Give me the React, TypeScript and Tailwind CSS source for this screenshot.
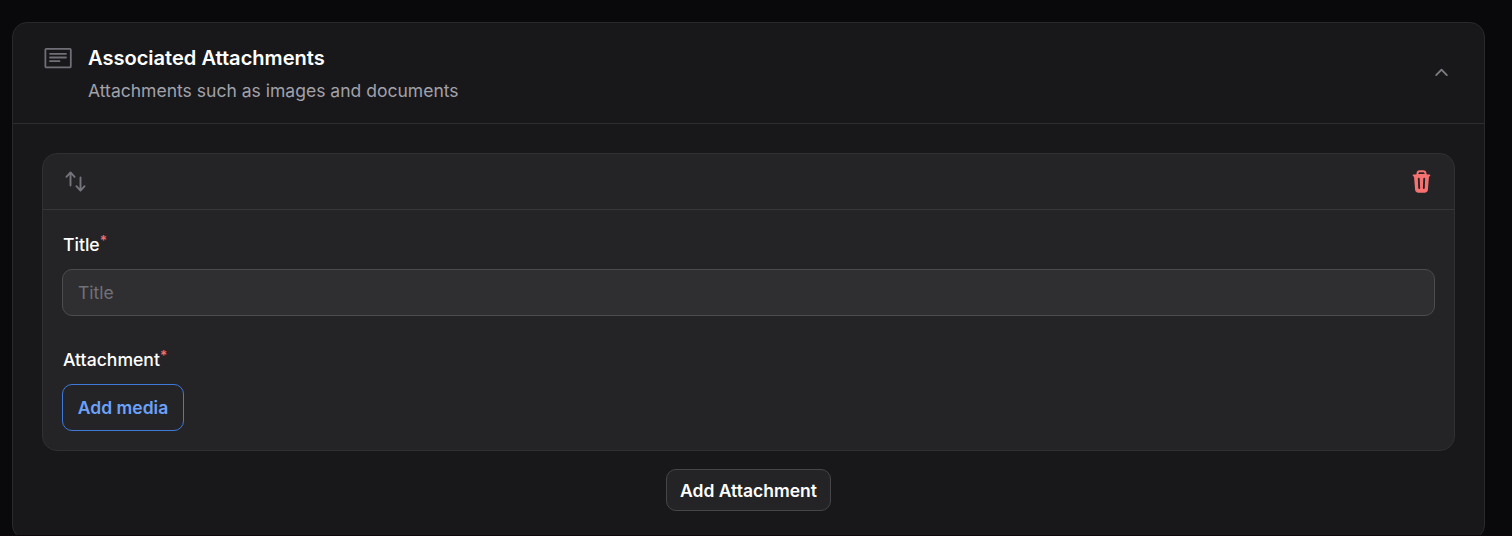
import type { ReactNode } from 'react';
import { HiMiniArrowsUpDown, HiMiniChevronUp, HiMiniTrash } from 'react-icons/hi2';

function AttachmentsIcon() {
  return (
    <svg
      className="mt-1 h-[22px] w-7 text-[#6f6f77]"
      viewBox="0 0 28 22"
      fill="none"
      stroke="currentColor"
      strokeWidth="1.8"
      strokeLinecap="round"
    >
      <rect x="1.4" y="1.8" width="25.4" height="18.6" rx="1" />
      <path d="M6 6.8h16M6 10.5h16M6 14.2h9.5" />
    </svg>
  );
}

function FieldLabel({ children }: { children: ReactNode }) {
  return (
    <label className="ml-px flex h-[30px] items-center text-[17.6px] font-medium text-white">
      <span>
        {children}
        <sup className="top-[-0.4em] text-[13.5px] font-semibold text-[#f87171]">*</sup>
      </span>
    </label>
  );
}

export default function App() {
  return (
    <div className="h-[536px] overflow-hidden border-b border-[#0d080b] bg-[#09090b] pt-[22px] pr-[27px] pl-3 font-['Inter',sans-serif]">
      <section className="h-[518px] rounded-[15px] border border-[#29292b] bg-[#18181b]">
        <header className="flex h-[101px] items-start border-b border-[#2e2e30] pt-5 pr-[30px] pl-[31px]">
          <AttachmentsIcon />
          <div className="ml-4 flex-1">
            <h3 className="text-[20.06px] leading-[30px] font-semibold text-white">
              Associated Attachments
            </h3>
            <p className="mt-[3px] text-[17.54px] leading-[30px] text-[#a1a1aa]">
              Attachments such as images and documents
            </p>
          </div>
          <button type="button" className="mt-[18px] text-[#7b7b80]">
            <HiMiniChevronUp className="size-[25px]" />
          </button>
        </header>

        <div className="px-[29px] pt-[29px]">
          <div className="h-[298px] rounded-[15px] border border-[#303032] bg-[#242427]">
            <div className="flex h-14 items-center justify-between border-b border-[#363638] px-5">
              <button type="button" className="text-[#75757d]">
                <HiMiniArrowsUpDown className="size-[25px]" />
              </button>
              <button type="button" className="text-[#f87171]">
                <HiMiniTrash className="size-[25px]" />
              </button>
            </div>

            <div className="px-[19px] pt-5">
              <FieldLabel>Title</FieldLabel>
              <input
                type="text"
                placeholder="Title"
                className="mt-[9px] block h-[47px] w-full rounded-[10px] border border-[#4c4c4e] bg-[#2f2f31] px-[15px] text-[17.5px] text-white placeholder:text-[#71717a]"
              />
              <div className="mt-[29px]">
                <FieldLabel>Attachment</FieldLabel>
              </div>
              <button
                type="button"
                className="mt-[9px] flex h-[47px] w-[122px] items-center justify-center rounded-[10px] border border-[#3f79da] pt-0.5 text-[17.5px] font-semibold text-[#6ba2fa]"
              >
                Add media
              </button>
            </div>
          </div>

          <button
            type="button"
            className="mx-auto mt-[18px] flex h-[42px] w-[165px] items-center justify-center rounded-[10px] border border-[#464648] bg-[#242427] pt-[3px] text-[17.5px] font-semibold text-white"
          >
            Add Attachment
          </button>
        </div>
      </section>
    </div>
  );
}
